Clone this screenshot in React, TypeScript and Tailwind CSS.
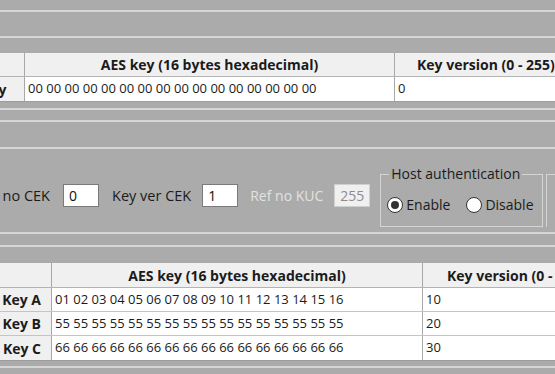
import React from "react";

const font = { fontFamily: '"Open Sans", "Noto Sans", sans-serif' };

function HLine({ className = "" }: { className?: string }) {
  return <div className={`h-[2px] w-full bg-[#d6d6d6] ${className}`} />;
}

function Radio({ checked, label }: { checked: boolean; label: string }) {
  return (
    <div className="flex items-center gap-[3px]">
      <div className="flex h-[16px] w-[16px] items-center justify-center rounded-full border border-[#333] bg-white">
        {checked && <div className="h-[8px] w-[8px] rounded-full bg-[#333]" />}
      </div>
      <span className="text-[14px] leading-none text-[#1b1b1b]">{label}</span>
    </div>
  );
}

export default function App() {
  return (
    <div className="relative h-[374px] w-[555px] overflow-hidden bg-[#ababab]" style={font}>
      <div className="h-[10px]" />
      <HLine />
      <div className="h-[24px]" />
      <HLine />
      <div className="h-[15px]" />

      {/* Top table */}
      <div className="flex w-[700px] flex-col border-b border-[#9c9c9c]">
        <div className="flex h-[24px] bg-[#f0f0f0] border-b border-[#b4b4b4]">
          <div className="w-[25px] shrink-0 border-r border-[#a8a8a8]" />
          <div className="flex w-[370px] shrink-0 items-center justify-center border-r border-[#a8a8a8] text-[14px] font-bold text-[#1b1b1b]">
            AES key (16 bytes hexadecimal)
          </div>
          <div className="flex flex-1 items-center pl-[22px] text-[14px] font-bold text-[#1b1b1b]">
            Key version (0 - 255)
          </div>
        </div>
        <div className="flex h-[24px] bg-white">
          <div className="flex w-[25px] shrink-0 items-center overflow-hidden border-r border-[#a8a8a8] bg-[#f0f0f0] text-[14px] font-bold text-[#1b1b1b]">
            <span className="ml-[-19px] shrink-0 whitespace-nowrap">Key</span>
          </div>
          <div className="flex w-[370px] shrink-0 items-center border-r border-[#a8a8a8] pl-[3px] text-[13px] text-[#1b1b1b]">
            00 00 00 00 00 00 00 00 00 00 00 00 00 00 00 00
          </div>
          <div className="flex flex-1 items-center pl-[3px] text-[13px] text-[#1b1b1b]">0</div>
        </div>
      </div>

      <div className="h-[6px]" />
      <HLine />
      <div className="h-[10px]" />
      <HLine />
      <div className="h-[25px]" />
      <HLine />

      {/* Middle controls */}
      <div className="relative h-[83px]">
        <div className="flex w-[700px] items-start pt-[25px]">
          <div className="flex h-[43px] shrink-0 items-center">
            <div className="flex w-[50px] shrink-0 justify-end overflow-hidden">
              <span className="shrink-0 whitespace-nowrap text-[14.5px] text-[#1b1b1b]">Ref no CEK</span>
            </div>
            <div className="ml-[13px] flex h-[23px] w-[36px] shrink-0 items-center border border-[#7a7a7a] bg-white pl-[5px] text-[14px] text-[#111]">
              0
            </div>
            <span className="ml-[13px] shrink-0 whitespace-nowrap text-[14.5px] text-[#1b1b1b]">Key ver CEK</span>
            <div className="ml-[11px] flex h-[23px] w-[36px] shrink-0 items-center border border-[#7a7a7a] bg-white pl-[5px] text-[14px] text-[#111]">
              1
            </div>
            <span className="ml-[12px] shrink-0 whitespace-nowrap text-[14px] text-[#e2e2e2]">Ref no KUC</span>
            <div className="ml-[11px] flex h-[23px] w-[36px] shrink-0 items-center border border-[#cfcfcf] bg-[#f0f0f0] pl-[5px] text-[14px] text-[#8c8c8c]">
              255
            </div>
          </div>

          {/* Host authentication group */}
          <div className="relative ml-[10px] h-[53px] w-[163px] shrink-0 border border-[#d4d4d4]">
            <span className="absolute left-[8px] top-[-11px] whitespace-nowrap bg-[#ababab] px-[2px] text-[14px] leading-[20px] text-[#1b1b1b]">
              Host authentication
            </span>
            <div className="flex h-full items-center gap-[16px] pl-[6px] pt-[8px]">
              <Radio checked label="Enable" />
              <Radio checked={false} label="Disable" />
            </div>
          </div>

          <div className="ml-[3px] h-[53px] w-[40px] shrink-0 border-l border-t border-[#d4d4d4]" />
        </div>
      </div>

      <HLine />
      <div className="h-[11px]" />
      <HLine />
      <div className="h-[16px]" />

      {/* Bottom table */}
      <div className="flex w-[700px] flex-col border-b border-[#9c9c9c]">
        <div className="flex h-[25px] bg-[#f0f0f0] border-b border-[#b4b4b4]">
          <div className="w-[52px] shrink-0 border-r border-[#a8a8a8]" />
          <div className="flex w-[371px] shrink-0 items-center justify-center border-r border-[#a8a8a8] text-[14px] font-bold text-[#1b1b1b]">
            AES key (16 bytes hexadecimal)
          </div>
          <div className="flex flex-1 items-center pl-[24px] text-[14px] font-bold text-[#1b1b1b]">
            Key version (0 - 255)
          </div>
        </div>
        {[
          ["Key A", "01 02 03 04 05 06 07 08 09 10 11 12 13 14 15 16", "10"],
          ["Key B", "55 55 55 55 55 55 55 55 55 55 55 55 55 55 55 55", "20"],
          ["Key C", "66 66 66 66 66 66 66 66 66 66 66 66 66 66 66 66", "30"],
        ].map(([k, v, ver], i) => (
          <div key={k} className={`flex h-[24px] bg-white ${i < 2 ? "border-b border-[#c4c4c4]" : ""}`}>
            <div className="flex w-[52px] shrink-0 items-center justify-end border-r border-[#a8a8a8] bg-[#f0f0f0] pr-[10px] text-[14px] font-bold text-[#1b1b1b]">
              {k}
            </div>
            <div className="flex w-[371px] shrink-0 items-center border-r border-[#a8a8a8] pl-[3px] text-[13px] text-[#1b1b1b]">
              {v}
            </div>
            <div className="flex flex-1 items-center pl-[3px] text-[13px] text-[#1b1b1b]">{ver}</div>
          </div>
        ))}
      </div>

      <div className="h-[5px]" />
      <HLine />
    </div>
  );
}
